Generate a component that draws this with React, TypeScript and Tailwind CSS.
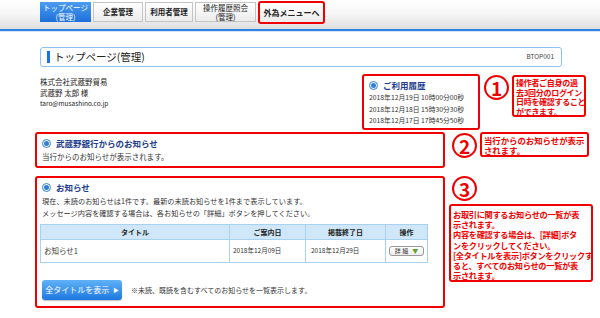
import { FC, ReactNode } from 'react';

const RadioMark: FC = () => (
    <span className="flex h-[9px] w-[9px] shrink-0 items-center justify-center rounded-full border border-[#2f7fd8] bg-white">
        <span className="h-[5px] w-[5px] rounded-full bg-[#2f7fd8]" />
    </span>
);

const CircleNum: FC<{ n: string }> = ({ n }) => (
    <div className="flex h-[25px] w-[25px] shrink-0 items-center justify-center rounded-full border-[2.5px] border-[#f00000] text-[19px] font-bold leading-none text-[#f00000]">
        {n}
    </div>
);

const Callout: FC<{ className?: string; children: ReactNode }> = ({
    className,
    children,
}) => (
    <div
        className={`whitespace-nowrap rounded-[3px] border-2 border-[#f00000] bg-white px-[2px] font-bold text-[#f00000] ${className ?? ''}`}>
        {children}
    </div>
);

const SectionTitle: FC<{ children: ReactNode }> = ({ children }) => (
    <div className="flex items-center gap-[5px] text-[8.5px] font-bold leading-[12px] text-[#1d3e8e]">
        <RadioMark />
        <span>{children}</span>
    </div>
);

const tabs = [
    { label: ['企業管理'], w: 'w-[50px]' },
    { label: ['利用者管理'], w: 'w-[48px]' },
    { label: ['操作履歴照会', '(管理)'], w: 'w-[61px]' },
];

export default function App() {
    return (
        <div
            className="relative h-[318px] w-[600px] overflow-hidden bg-white text-[#333]"
            style={{ fontFamily: '"Noto Sans CJK JP", "Noto Sans", sans-serif' }}>
            {/* global nav */}
            <div className="flex h-[29px] items-start gap-[2px] bg-gradient-to-b from-white via-[#f6f6f6] to-[#dedede] pl-[40px] pt-[2px]">
                <div className="flex h-[20px] w-[51px] flex-col items-center justify-center bg-gradient-to-b from-[#4d9cf0] to-[#1b6fd8] text-[7.5px] leading-[9.5px] text-white">
                    <span>トップページ</span>
                    <span>(管理)</span>
                </div>
                {tabs.map((t) => (
                    <div
                        key={t.label[0]}
                        className={`flex h-[20px] ${t.w} flex-col items-center justify-center border border-[#c4c4c4] bg-gradient-to-b from-white to-[#ececec] text-[7.5px] font-bold leading-[9.5px] text-[#222]`}>
                        {t.label.map((l) => (
                            <span key={l} className={t.label.length > 1 ? 'font-normal' : ''}>
                                {l}
                            </span>
                        ))}
                    </div>
                ))}
                <div className="-mt-[1px] flex h-[23px] w-[67px] items-center justify-center rounded-[3px] border-2 border-[#f00000] bg-gradient-to-b from-white to-[#ececec] text-[8px] font-bold text-[#222]">
                    外為メニューへ
                </div>
            </div>
            <div className="h-[2px] bg-[#2b84e3]" />
            <div className="h-[1px] bg-[#d6e6f6]" />

            <div className="pl-[35px]">
                {/* page title */}
                <div className="ml-[5px] mt-[15px] flex h-[20px] w-[522px] items-center rounded-[3px] border border-[#8cc3f2] pl-[6px] pr-[7px]">
                    <span className="h-[12px] w-[3px] bg-[#1b74de]" />
                    <span className="ml-[4px] text-[10.5px] leading-none text-[#222]">
                        トップページ(管理)
                    </span>
                    <span className="ml-auto text-[6.5px] text-[#444]">BTOP001</span>
                </div>

                {/* user info + history */}
                <div className="mt-[7px] flex h-[56px] items-start">
                    <div className="ml-[5px] mt-[2px] w-[322px] text-[7.5px] leading-[11px] text-[#222]">
                        <div>株式会社武蔵野貿易</div>
                        <div>武蔵野 太郎 様</div>
                        <div className="text-[6.5px]">taro@musashino.co.jp</div>
                    </div>
                    <div className="h-[56px] w-[118px] rounded-[3px] border-2 border-[#f00000] px-[5px] pt-[3px]">
                        <SectionTitle>ご利用履歴</SectionTitle>
                        <div className="mt-[1px] text-[6.8px] leading-[11.5px] text-[#333]">
                            <div>2018年12月19日 10時00分00秒</div>
                            <div>2018年12月18日 15時30分30秒</div>
                            <div>2018年12月17日 17時45分50秒</div>
                        </div>
                    </div>
                    <div className="ml-[4px] mt-[1px]">
                        <CircleNum n="1" />
                    </div>
                    <Callout className="ml-[3px] mt-[1px] h-[42px] w-[74px] py-[1px] text-[8px] leading-[9.5px] tracking-[-0.3px]">
                        操作者ご自身の過
                        <br />
                        去3回分のログイン
                        <br />
                        日時を確認すること
                        <br />
                        ができます。
                    </Callout>
                </div>

                {/* bank notice */}
                <div className="mt-[2px] flex items-start">
                    <div className="h-[36px] w-[410px] rounded-[3px] border-2 border-[#f00000] px-[5px] pt-[3px]">
                        <SectionTitle>武蔵野銀行からのお知らせ</SectionTitle>
                        <div className="mt-[2px] text-[7.5px] leading-[11px]">
                            当行からのお知らせが表示されます。
                        </div>
                    </div>
                    <div className="ml-[7px] mt-[1px]">
                        <CircleNum n="2" />
                    </div>
                    <Callout className="ml-[3px] h-[25px] w-[109px] py-[1px] text-[8.4px] leading-[10px]">
                        当行からのお知らせが表示
                        <br />
                        されます。
                    </Callout>
                </div>

                {/* notices */}
                <div className="mt-[8px] flex items-start">
                    <div className="flex h-[132px] w-[410px] flex-col rounded-[3px] border-2 border-[#f00000] px-[3px] pt-[3px]">
                        <div className="px-[2px]">
                            <SectionTitle>お知らせ</SectionTitle>
                        </div>
                        <div className="mt-[2px] pl-[2px] text-[7.2px] leading-[12px]">
                            <div>
                                現在、未読のお知らせは1件です。最新の未読お知らせを1件まで表示しています。
                            </div>
                            <div>
                                メッセージ内容を確認する場合は、各お知らせの「詳細」ボタンを押してください。
                            </div>
                        </div>
                        <table className="mt-[5px] w-[388px] border-collapse text-[7px]">
                            <thead>
                                <tr className="h-[15px] bg-[#cfe7f8] font-bold text-[#222]">
                                    <th className="w-[189px] border border-[#a9d2f0]">タイトル</th>
                                    <th className="w-[76px] border border-[#a9d2f0]">ご案内日</th>
                                    <th className="w-[80px] border border-[#a9d2f0]">掲載終了日</th>
                                    <th className="border border-[#a9d2f0]">操作</th>
                                </tr>
                            </thead>
                            <tbody>
                                <tr className="h-[23px] text-[#333]">
                                    <td className="border border-[#a9d2f0] pl-[3px] text-[7.5px]">
                                        お知らせ1
                                    </td>
                                    <td className="border border-[#a9d2f0] pl-[3px] text-[6.5px]">
                                        2018年12月09日
                                    </td>
                                    <td className="border border-[#a9d2f0] pl-[5px] text-[6.5px]">
                                        2018年12月29日
                                    </td>
                                    <td className="border border-[#a9d2f0]">
                                        <div className="mx-auto flex h-[10px] w-[35px] items-center justify-center gap-[4px] rounded-[3px] border border-[#999] bg-gradient-to-b from-white to-[#eee] text-[6px] leading-none">
                                            <span>詳 細</span>
                                            <span className="text-[6px] text-[#5aa51c]">▼</span>
                                        </div>
                                    </td>
                                </tr>
                            </tbody>
                        </table>
                        <div className="mt-[17px] flex items-center">
                            <div className="ml-[2px] flex h-[20px] w-[80px] items-center justify-center gap-[4px] rounded-[3px] bg-gradient-to-b from-[#5fb1f8] to-[#1a78e0] text-[8px] text-white shadow-[0_1px_1px_rgba(0,0,0,0.25)]">
                                <span>全タイトルを表示</span>
                                <span className="text-[5.5px]">▶</span>
                            </div>
                            <span className="ml-[9px] text-[7px] text-[#333]">
                                ※未読、既読を含むすべてのお知らせを一覧表示します。
                            </span>
                        </div>
                    </div>
                    <div className="flex flex-col">
                        <div className="ml-[7px]">
                            <CircleNum n="3" />
                        </div>
                        <Callout className="ml-[4px] mt-[3px] h-[78px] w-[144px] py-[3px] text-[8.2px] leading-[10.2px] tracking-[-0.3px]">
                            お取引に関するお知らせの一覧が表
                            <br />
                            示されます。
                            <br />
                            内容を確認する場合は、[詳細]ボタ
                            <br />
                            ンをクリックしてください。
                            <br />
                            [全タイトルを表示]ボタンをクリックす
                            <br />
                            ると、すべてのお知らせの一覧が表
                            <br />
                            示されます。
                        </Callout>
                    </div>
                </div>
            </div>
        </div>
    );
}
